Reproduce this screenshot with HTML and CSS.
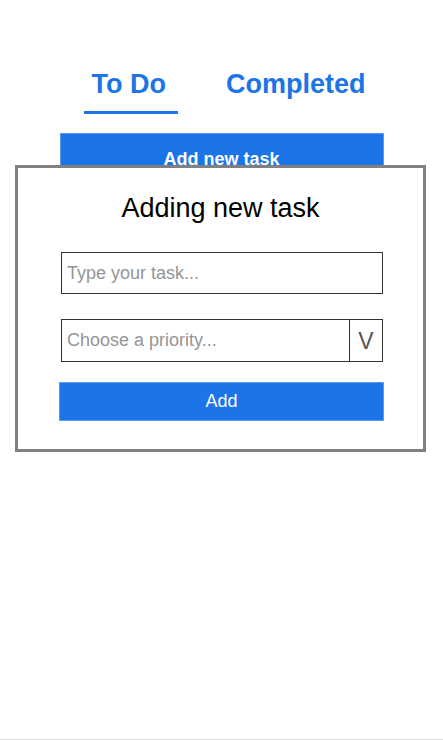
FILE: index.html
```html
<!DOCTYPE html>
<html lang="en">
<head>
<meta charset="utf-8">
<title>To Do</title>
<link rel="stylesheet" href="styles.css">
</head>
<body>
<div class="page">
  <nav class="tabs">
    <a class="tab active" href="#">To Do</a>
    <a class="tab" href="#">Completed</a>
  </nav>
  <button class="add-new" type="button">Add new task</button>

  <div class="modal">
    <h2 class="modal-title">Adding new task</h2>
    <form class="form">
      <input class="field" type="text" placeholder="Type your task...">
      <div class="select">
        <span class="select-text">Choose a priority...</span>
        <span class="select-arrow">V</span>
      </div>
      <button class="add-btn" type="button">Add</button>
    </form>
  </div>
</div>
</body>
</html>
```

FILE: styles.css
```css
* { box-sizing: border-box; }

html, body {
  margin: 0;
  padding: 0;
  background: #fff;
}

body {
  font-family: "Liberation Sans", Arial, sans-serif;
  color: #000;
}

.page {
  position: relative;
  height: 740px;
  border-bottom: 1px solid #dcdcdc;
}

.tabs {
  display: flex;
  justify-content: center;
  gap: 38px;
  padding: 69px 0 0 16px;
}

.tab {
  display: block;
  padding: 0 10px 11px;
  font-size: 27px;
  line-height: 31px;
  font-weight: bold;
  color: #1b74e8;
  text-decoration: none;
  border-bottom: 3px solid transparent;
}

.tab.active {
  padding: 0 12px 11px 8px;
  border-bottom-color: #1b74e8;
}

.add-new {
  display: block;
  width: 324px;
  height: 52px;
  margin: 19px auto 0;
  padding: 0;
  background: #1b74e8;
  border: 1px solid #5b9af0;
  color: #fff;
  font-family: inherit;
  font-size: 18px;
  font-weight: bold;
}

.modal {
  position: absolute;
  left: 15px;
  top: 165px;
  width: 411px;
  height: 287px;
  background: #fff;
  border: 3px solid #808080;
  padding-top: 25px;
}

.modal-title {
  margin: 0;
  text-align: center;
  font-size: 27px;
  line-height: 31px;
  font-weight: normal;
}

.form {
  display: flex;
  flex-direction: column;
  align-items: center;
  padding-left: 3px;
  margin-top: 28px;
}

.field {
  display: block;
  width: 322px;
  height: 42px;
  margin: 0;
  padding: 0 5px;
  border: 1px solid #333;
  font-family: inherit;
  font-size: 18px;
  color: #000;
  outline: none;
  background: #fff;
}

.field::placeholder {
  color: #959595;
  opacity: 1;
}

.select {
  display: flex;
  width: 322px;
  height: 43px;
  margin-top: 25px;
  border: 1px solid #333;
}

.select-text {
  flex: 1;
  display: flex;
  align-items: center;
  padding-left: 5px;
  font-size: 18px;
  color: #959595;
}

.select-arrow {
  width: 33px;
  display: flex;
  align-items: center;
  justify-content: center;
  border-left: 1px solid #333;
  font-size: 23px;
  color: #555;
  padding-top: 2px;
}

.add-btn {
  display: block;
  width: 325px;
  height: 39px;
  margin: 20px 1px 0 0;
  padding: 0 0 0 0;
  background: #1b74e8;
  border: 1px solid #5b9af0;
  color: #fff;
  font-family: inherit;
  font-size: 18px;
  font-weight: normal;
}
```
